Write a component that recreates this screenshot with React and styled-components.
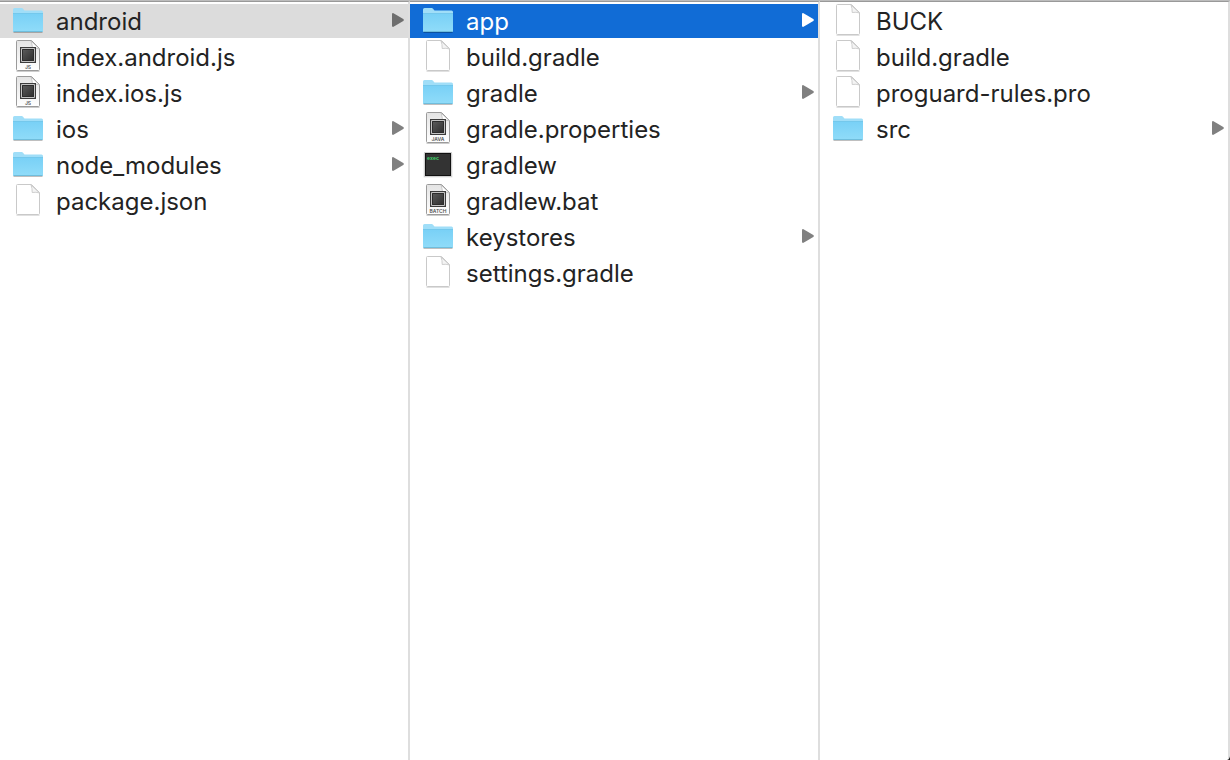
import React, { useState } from "react";
import styled, { createGlobalStyle } from "styled-components";

const columns = [
    {
        title: "Project",
        items: [
            { name: "android", kind: "folder" },
            { name: "index.android.js", kind: "source", label: "JS" },
            { name: "index.ios.js", kind: "source", label: "JS" },
            { name: "ios", kind: "folder" },
            { name: "node_modules", kind: "folder" },
            { name: "package.json", kind: "file" },
        ],
    },
    {
        title: "android",
        items: [
            { name: "app", kind: "folder" },
            { name: "build.gradle", kind: "file" },
            { name: "gradle", kind: "folder" },
            { name: "gradle.properties", kind: "source", label: "JAVA" },
            { name: "gradlew", kind: "exec" },
            { name: "gradlew.bat", kind: "source", label: "BATCH" },
            { name: "keystores", kind: "folder" },
            { name: "settings.gradle", kind: "file" },
        ],
    },
    {
        title: "app",
        items: [
            { name: "BUCK", kind: "file" },
            { name: "build.gradle", kind: "file" },
            { name: "proguard-rules.pro", kind: "file" },
            { name: "src", kind: "folder" },
        ],
    },
];

const GlobalStyle = createGlobalStyle`
  * {
    box-sizing: border-box;
  }
  body {
    margin: 0;
    background: #1c1c1c;
    font-family: Inter, "Liberation Sans", sans-serif;
  }
`;

const StyledBrowser = styled.main`
  display: grid;
  grid-template-columns: repeat(3, 1fr);
  min-height: 100vh;
  border-top: 1px solid #bcbcbc;
  border-bottom-right-radius: 3px 6px;
  background: #fff;
  overflow: hidden;
`;

const StyledColumn = styled.ul`
  display: flex;
  flex-direction: column;
  gap: 2px;
  min-width: 0;
  margin: 0;
  padding: 2px 0 0;
  border-top: 1px solid #999;
  border-right: 2px solid #dedede;
  list-style: none;
`;

const rowColors = {
    none: { background: "transparent", text: "#232323", arrow: "#808080" },
    path: { background: "#dcdcdc", text: "#232323", arrow: "#6e6e6e" },
    active: { background: "#116cd6", text: "#fff", arrow: "#fff" },
};

const StyledRow = styled.button`
  display: flex;
  align-items: flex-start;
  width: 100%;
  height: 34px;
  padding: 0 4px 0 12px;
  border: 0;
  background: ${(p) => rowColors[p.$state].background};
  color: ${(p) => rowColors[p.$state].text};
  font: inherit;
  text-align: left;
  cursor: default;
`;

const StyledName = styled.span`
  flex: 1;
  min-width: 0;
  margin-left: 12px;
  overflow: hidden;
  font-size: 24px;
  line-height: 36px;
  text-overflow: ellipsis;
  white-space: nowrap;
`;

const StyledIcon = styled.svg`
  flex: none;
  width: 32px;
  height: 32px;
`;

const StyledArrow = styled.svg`
  flex: none;
  width: 12px;
  height: 32px;
  fill: ${(p) => rowColors[p.$state].arrow};
`;

const FolderIcon = () => (
    <StyledIcon viewBox="0 0 32 32" aria-hidden="true">
        <path d="M1.500 28.500h29" stroke="#000" strokeOpacity="0.25" />
        <path d="M1 27V5.500q0-1.500 1.500-1.500h7q1 0 1.600.8l.9 1.200q.5.500 1.300.5H29.500q1.500 0 1.500 1.500V27z" fill="#a0def8" />
        <path d="M1 9h30V27q0 1-1 1H2q-1 0-1-1z" fill="url(#folderFront)" />
        <path d="M1 9.500h30" stroke="#74c8ec" />
        <path d="M1.500 27.500h29" stroke="#6fbddc" />
    </StyledIcon>
);

const pageOutline = "M5.500.500H19.500L27.500 8.500V29.500q0 1-1 1H5.500q-1 0-1-1V1.500q0-1 1-1z";

const FileIcon = () => (
    <StyledIcon viewBox="0 0 32 32" aria-hidden="true">
        <path d="M4.500 31.500h23" stroke="#000" strokeOpacity="0.12" />
        <path d={pageOutline} fill="#fff" stroke="#c9c9c9" />
        <path d="M19 1L27.500 9Q24 7.800 20.200 8.500Q20.300 4 19 1z" fill="#f4f4f4" stroke="#c9c9c9" strokeWidth="0.9" />
    </StyledIcon>
);

const SourceIcon = ({ label }) => (
    <StyledIcon viewBox="0 0 32 32" aria-hidden="true">
        <path d="M4.500 31.500h23" stroke="#000" strokeOpacity="0.2" />
        <path d={pageOutline} fill="url(#sourcePage)" stroke="#9b9b9b" />
        <path d="M19 1L27.500 9Q24 7.500 20.500 8.500Q20.300 4 19 1z" fill="#fff" stroke="#b4b4b4" strokeWidth="0.7" />
        <path d="M8 7h16v16H8z" fill="#3c3c3c" />
        <path d="M9.500 8.500h13v13h-13z" fill="url(#sourceScreen)" stroke="#c4c4c4" />
        <path d="M10.500 9.500h11v11h-11z" fill="none" stroke="#2c2c2c" />
        <text x="16" y="28.500" textAnchor="middle" fontSize="5" fontWeight="600" fill="#555">
            {label}
        </text>
    </StyledIcon>
);

const ExecIcon = () => (
    <StyledIcon viewBox="0 0 32 32" aria-hidden="true">
        <path d="M1.500 5.500h29v24h-29z" fill="#000" fillOpacity="0.1" />
        <path d="M2 4h28v25H2z" fill="#cfcfcf" />
        <path d="M3 5h26v23H3z" fill="#111" />
        <path d="M4 6h24v21H4z" fill="#333" />
        <text x="5" y="12" fontFamily="Liberation Mono, monospace" fontSize="5" fontWeight="700" fill="#3fd66a">
            exec
        </text>
    </StyledIcon>
);

const icons = {
    folder: FolderIcon,
    file: FileIcon,
    source: SourceIcon,
    exec: ExecIcon,
};

const StyledDefs = styled.svg`
  position: absolute;
  width: 0;
  height: 0;
`;

// gradients shared by every icon
const IconDefs = () => (
    <StyledDefs aria-hidden="true">
        <defs>
            <linearGradient id="folderFront" x1="0" y1="0" x2="0" y2="1">
                <stop offset="0" stopColor="#78d0f6" />
                <stop offset="1" stopColor="#90dcf9" />
            </linearGradient>
            <linearGradient id="sourcePage" x1="0" y1="0" x2="0" y2="1">
                <stop offset="0" stopColor="#e4e4e4" />
                <stop offset="1" stopColor="#fff" />
            </linearGradient>
            <linearGradient id="sourceScreen" x1="0" y1="0" x2="1" y2="1">
                <stop offset="0" stopColor="#606060" />
                <stop offset="1" stopColor="#2a2a2a" />
            </linearGradient>
        </defs>
    </StyledDefs>
);

const Row = ({ item, state, onclick }) => {
    const Icon = icons[item.kind];
    return (
        <li>
            <StyledRow $state={state} onClick={onclick}>
                <Icon label={item.label} />
                <StyledName>{item.name}</StyledName>
                {item.kind === "folder" && (
                    <StyledArrow $state={state} viewBox="0 0 12 32" aria-hidden="true">
                        <path d="M0 10.200Q0 8.800 1.500 9.200L11.300 15q1 1 0 2L1.500 22.800Q0 23.200 0 21.800z" />
                    </StyledArrow>
                )}
            </StyledRow>
        </li>
    );
};

function App() {
    const [selection, setSelection] = useState(["android", "app"]);
    const rowClickedHandler = (depth, name) => {
        setSelection([...selection.slice(0, depth), name]);
    };
    const rowState = (depth, name) => {
        if (selection[depth] !== name) {
            return "none";
        }
        return depth === selection.length - 1 ? "active" : "path";
    };
    return (
        <>
            <GlobalStyle />
            <IconDefs />
            <StyledBrowser>
                {columns.map((column, depth) => (
                    <StyledColumn key={column.title} aria-label={column.title}>
                        {column.items.map((item) => (
                            <Row
                                key={item.name}
                                item={item}
                                state={rowState(depth, item.name)}
                                onclick={() => rowClickedHandler(depth, item.name)}
                            />
                        ))}
                    </StyledColumn>
                ))}
            </StyledBrowser>
        </>
    );
}

export default App;
